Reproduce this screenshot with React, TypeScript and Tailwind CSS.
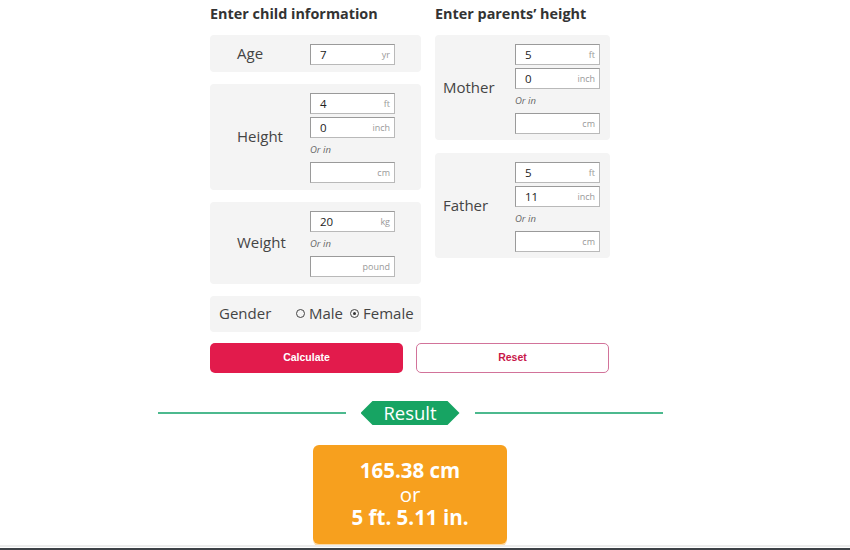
import React from 'react';

const font = { fontFamily: '"Open Sans", "Noto Sans", sans-serif' };

function Field({ value, unit }: { value?: string; unit: string }) {
  return (
    <div className="flex h-[21px] w-[85px] items-center justify-between border border-[#b9b9b9] border-t-[#9a9a9a] border-l-[#9a9a9a] bg-white pl-[9px] pr-[4px] leading-[16px]">
      <span className="text-[11.5px] text-[#222]">{value}</span>
      <span className="text-[9px] text-[#999]">{unit}</span>
    </div>
  );
}

function OrIn() {
  return <div className="flex h-[24px] items-center text-[9.5px] italic text-[#666]">Or in</div>;
}

function HeightFields({ ft, inch }: { ft: string; inch: string }) {
  return (
    <div className="flex flex-col">
      <Field value={ft} unit="ft" />
      <div className="mt-[3px]">
        <Field value={inch} unit="inch" />
      </div>
      <OrIn />
      <Field unit="cm" />
    </div>
  );
}

function Radio({ checked, label }: { checked?: boolean; label: string }) {
  return (
    <span className="flex items-center gap-[4px]">
      <span className="flex h-[9px] w-[9px] items-center justify-center rounded-full border border-[#444]">
        {checked && <span className="h-[3px] w-[3px] rounded-full bg-[#333]" />}
      </span>
      <span>{label}</span>
    </span>
  );
}

export default function App() {
  return (
    <div className="flex h-[550px] w-[850px] flex-col overflow-hidden bg-white" style={font}>
      <div className="flex w-[820px] flex-col items-center">
        <div className="flex w-[400px] gap-[14px] pt-[4px]">
          {/* Child */}
          <div className="flex w-[211px] flex-col">
            <h2 className="mb-[11px] h-[20px] whitespace-nowrap text-[14.4px] font-bold leading-[20px] text-[#333]">
              Enter child information
            </h2>
            <div className="flex items-center rounded-[4px] bg-[#f4f4f4] pb-[7px] pl-[27px] pt-[9px]">
              <span className="mb-[4px] w-[73px] text-[15px] leading-[16px] text-[#444]">Age</span>
              <Field value="7" unit="yr" />
            </div>
            <div className="mt-[12px] flex items-center rounded-[4px] bg-[#f4f4f4] pb-[7px] pl-[27px] pt-[9px]">
              <span className="mb-[4px] w-[73px] text-[15px] leading-[16px] text-[#444]">Height</span>
              <HeightFields ft="4" inch="0" />
            </div>
            <div className="mt-[12px] flex items-center rounded-[4px] bg-[#f4f4f4] pb-[7px] pl-[27px] pt-[9px]">
              <span className="mb-[4px] w-[73px] text-[15px] leading-[16px] text-[#444]">Weight</span>
              <div className="flex flex-col">
                <Field value="20" unit="kg" />
                <OrIn />
                <Field unit="pound" />
              </div>
            </div>
            <div className="mt-[12px] flex h-[36px] items-center rounded-[4px] bg-[#f4f4f4] pb-[2px] pl-[9px] text-[15px] leading-[20px] text-[#444]">
              <span className="w-[77px]">Gender</span>
              <div className="flex items-center gap-[7px]">
                <Radio label="Male" />
                <Radio checked label="Female" />
              </div>
            </div>
          </div>

          {/* Parents */}
          <div className="flex w-[175px] flex-col">
            <h2 className="mb-[11px] h-[20px] whitespace-nowrap text-[14.4px] font-bold leading-[20px] text-[#333]">
              Enter parents’ height
            </h2>
            <div className="flex items-center rounded-[4px] bg-[#f4f4f4] pb-[6px] pl-[8px] pt-[9px]">
              <span className="mb-[4px] w-[72px] text-[15px] leading-[16px] text-[#444]">Mother</span>
              <HeightFields ft="5" inch="0" />
            </div>
            <div className="mt-[13px] flex items-center rounded-[4px] bg-[#f4f4f4] pb-[6px] pl-[8px] pt-[9px]">
              <span className="mb-[4px] w-[72px] text-[15px] leading-[16px] text-[#444]">Father</span>
              <HeightFields ft="5" inch="11" />
            </div>
          </div>
        </div>

        {/* Buttons */}
        <div className="mt-[11px] flex w-[400px] gap-[13px]" style={{ fontFamily: '"Liberation Sans", Arial, sans-serif' }}>
          <button className="h-[30px] w-[193px] rounded-[5px] bg-[#e21b4c] text-[10.5px] font-bold text-white">
            Calculate
          </button>
          <button className="h-[30px] w-[193px] rounded-[5px] border border-[#d2739a] bg-white text-[10.5px] font-bold text-[#c8174a]">
            Reset
          </button>
        </div>

        {/* Result divider */}
        <div className="mt-[28px] flex items-center">
          <div className="h-[2px] w-[188px] bg-[#4cb98e]" />
          <div className="ml-[15px] mr-[15px] flex h-[24px] w-[99px] items-center justify-center bg-[#17a463] text-[18.5px] leading-[24px] text-white [clip-path:polygon(12px_0,87px_0,99px_50%,87px_100%,12px_100%,0_50%)]">
            Result
          </div>
          <div className="h-[2px] w-[188px] bg-[#4cb98e]" />
        </div>

        {/* Result box */}
        <div className="mt-[20px] flex h-[99px] w-[194px] flex-col items-center justify-center rounded-[6px] bg-[#f7a01e] text-[20.5px] leading-[23.5px] text-white shadow-[0_2px_0_#fcd9a6]">
          <span className="font-bold">165.38 cm</span>
          <span>or</span>
          <span className="font-bold">5 ft. 5.11 in.</span>
        </div>
      </div>

      <div className="mt-auto h-[2px] w-full bg-[#ececec]" />
      <div className="mt-[1px] h-[2px] w-full bg-[#3d4247]" />
    </div>
  );
}
